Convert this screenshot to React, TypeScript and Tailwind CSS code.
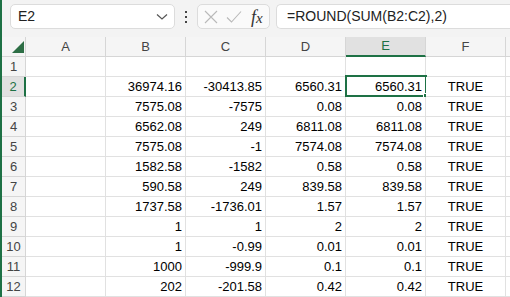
import React from "react";

const COLS = ["A", "B", "C", "D", "E", "F", ""];

const ROWS: string[][] = [
  ["", "", "", "", "", ""],
  ["", "36974.16", "-30413.85", "6560.31", "6560.31", "TRUE"],
  ["", "7575.08", "-7575", "0.08", "0.08", "TRUE"],
  ["", "6562.08", "249", "6811.08", "6811.08", "TRUE"],
  ["", "7575.08", "-1", "7574.08", "7574.08", "TRUE"],
  ["", "1582.58", "-1582", "0.58", "0.58", "TRUE"],
  ["", "590.58", "249", "839.58", "839.58", "TRUE"],
  ["", "1737.58", "-1736.01", "1.57", "1.57", "TRUE"],
  ["", "1", "1", "2", "2", "TRUE"],
  ["", "1", "-0.99", "0.01", "0.01", "TRUE"],
  ["", "1000", "-999.9", "0.1", "0.1", "TRUE"],
  ["", "202", "-201.58", "0.42", "0.42", "TRUE"],
];

function FormulaBar() {
  return (
    <div className="flex h-[37px] items-start bg-[#f3f3f3] pt-[4px]">
      {/* Name Box */}
      <div className="ml-[8px] flex h-[25px] w-[165px] items-center justify-between rounded-[5px] border border-[#dcdcdc] bg-white pl-[7px] pr-[6px]">
        <span className="text-[14px] text-[#222]">E2</span>
        <svg width="12" height="8" viewBox="0 0 12 8">
          <path d="M1 1.5 L6 6 L11 1.5" fill="none" stroke="#555" strokeWidth="1.2" />
        </svg>
      </div>
      {/* dots */}
      <div className="flex h-[25px] w-[22px] flex-col items-center justify-center gap-[3px]">
        <span className="h-[2px] w-[2px] bg-[#444]" />
        <span className="h-[2px] w-[2px] bg-[#444]" />
        <span className="h-[2px] w-[2px] bg-[#444]" />
      </div>
      {/* cancel / enter / fx */}
      <div className="flex h-[25px] w-[73px] items-center rounded-[5px] border border-[#dcdcdc] bg-[#fafafa] pl-[6px]">
        <svg width="14" height="14" viewBox="0 0 14 14">
          <path d="M1 1 L13 13 M13 1 L1 13" stroke="#b9b9b9" strokeWidth="1.1" />
        </svg>
        <svg className="ml-[8px]" width="16" height="14" viewBox="0 0 16 14">
          <path d="M1 7.5 L5.5 12 L15 1.5" fill="none" stroke="#b9b9b9" strokeWidth="1.1" />
        </svg>
        <span className="ml-[9px] font-['Liberation_Serif'] text-[18px] italic leading-none text-[#333]">
          f<span className="text-[15px]">x</span>
        </span>
      </div>
      {/* formula input */}
      <div className="ml-[6px] flex h-[25px] flex-1 items-center rounded-l-[5px] border border-r-0 border-[#dcdcdc] bg-white pl-[10px]">
        <span className="text-[14px] text-[#222]">=ROUND(SUM(B2:C2),2)</span>
      </div>
    </div>
  );
}

function HeaderRow() {
  return (
    <div className="flex h-[20px] bg-[#f5f5f5]">
      <div className="relative h-[20px] w-[24px] shrink-0 border-r border-b border-[#d6d6d6]">
        <svg className="absolute left-[10px] top-[4px]" width="12" height="12" viewBox="0 0 12 12">
          <path d="M12 0 L12 12 L0 12 Z" fill="#2d6e45" />
        </svg>
      </div>
      {COLS.map((c, i) => (
        <div
          key={i}
          className={`flex h-[20px] w-[80px] shrink-0 items-center justify-center border-r text-[13px] ${
            i === 4
              ? "border-b-2 border-b-[#1e7145] border-r-[#d6d6d6] bg-[#e1e1e1] text-[#1e7145]"
              : "border-b border-[#d6d6d6] text-[#444]"
          }`}
        >
          {c}
        </div>
      ))}
    </div>
  );
}

function DataRow({ cells, n }: { cells: string[]; n: number }) {
  const active = n === 2;
  return (
    <div className="flex h-[20px]">
      <div
        className={`flex h-[20px] w-[24px] shrink-0 items-center justify-center border-b border-[#d6d6d6] text-[13px] ${
          active ? "border-r-2 border-r-[#1e7145] bg-[#e1e1e1] text-[#1e7145]" : "border-r bg-[#f5f5f5] text-[#444]"
        }`}
      >
        {n}
      </div>
      {[...cells, ""].map((v, i) => (
        <div
          key={i}
          className={`relative flex h-[20px] w-[80px] shrink-0 items-center border-r border-b border-[#e1e1e1] bg-white px-[3px] text-[13px] text-black ${
            v === "TRUE" ? "justify-center" : "justify-end"
          }`}
        >
          {v}
          {active && i === 4 && (
            <div className="absolute -left-[1px] -top-[2px] h-[22px] w-[82px] border-2 border-[#1e7145]">
              <div className="absolute -bottom-[4px] -right-[4px] h-[6px] w-[6px] border border-white bg-[#1e7145]" />
            </div>
          )}
        </div>
      ))}
    </div>
  );
}

export default function App() {
  return (
    <div className="flex h-[297px] w-[510px] overflow-hidden bg-white font-['Liberation_Sans',sans-serif]">
      <div className="w-[2px] shrink-0 bg-[#1e7145]" />
      <div className="flex min-w-0 flex-1 flex-col">
        <FormulaBar />
        <div className="overflow-hidden">
          <HeaderRow />
          {ROWS.map((r, i) => (
            <DataRow key={i} cells={r} n={i + 1} />
          ))}
        </div>
      </div>
    </div>
  );
}
